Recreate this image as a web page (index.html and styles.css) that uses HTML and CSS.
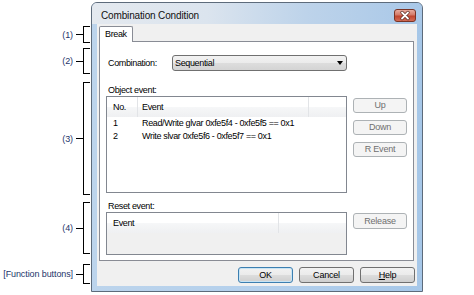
FILE: index.html
```html
<!DOCTYPE html>
<html>
<head>
<meta charset="utf-8">
<link rel="stylesheet" href="styles.css">
</head>
<body>
<div class="page">
  <div class="callout c1"><span class="c-label">(1)</span><span class="dash"></span><span class="brace"></span></div>
  <div class="callout c2"><span class="c-label">(2)</span><span class="dash"></span><span class="brace"></span></div>
  <div class="callout c3"><span class="c-label">(3)</span><span class="dash"></span><span class="brace"></span></div>
  <div class="callout c4"><span class="c-label">(4)</span><span class="dash"></span><span class="brace"></span></div>
  <div class="callout c5"><span class="c-label">[Function buttons]</span><span class="dash"></span><span class="brace"></span></div>

  <div class="window">
    <div class="titlebar">
      <span class="title">Combination Condition</span>
      <svg class="close" width="22" height="13" viewBox="0 0 22 13">
        <defs>
          <linearGradient id="cg" x1="0" y1="0" x2="0" y2="1">
            <stop offset="0" stop-color="#eab0a4"/>
            <stop offset="0.45" stop-color="#d47a68"/>
            <stop offset="0.55" stop-color="#c0452f"/>
            <stop offset="1" stop-color="#d6705a"/>
          </linearGradient>
        </defs>
        <rect x="0.5" y="0.5" width="21" height="12" rx="2.5" fill="url(#cg)" stroke="#7a3426"/>
        <path d="M8 3.5 L14 9.5 M14 3.5 L8 9.5" stroke="#5a2a22" stroke-width="3.2" stroke-linecap="round"/>
        <path d="M8 3.5 L14 9.5 M14 3.5 L8 9.5" stroke="#ffffff" stroke-width="1.8" stroke-linecap="round"/>
      </svg>
    </div>
    <div class="client">
      <div class="tabs"><div class="tab">Break</div></div>
      <div class="panel">
        <div class="combo-row">
          <span class="combo-label">Combination:</span>
          <div class="select"><span>Sequential</span><span class="arrow"></span></div>
        </div>
        <div class="section-label">Object event:</div>
        <div class="obj-row">
          <div class="list obj-list">
            <div class="lv-head">
              <div class="h-no">No.</div>
              <div class="h-ev">Event</div>
            </div>
            <div class="row"><div class="c-no">1</div><div class="c-ev">Read/Write glvar 0xfe5f4 - 0xfe5f5 == 0x1</div></div>
            <div class="row"><div class="c-no">2</div><div class="c-ev">Write slvar 0xfe5f6 - 0xfe5f7 == 0x1</div></div>
          </div>
          <div class="side">
            <div class="btn disabled">Up</div>
            <div class="btn disabled">Down</div>
            <div class="btn disabled">R Event</div>
          </div>
        </div>
        <div class="section-label reset-label">Reset event:</div>
        <div class="obj-row">
          <div class="list reset-list">
            <div class="lv-head">
              <div class="h-rev">Event</div>
            </div>
          </div>
          <div class="side side-reset">
            <div class="btn btn-tall disabled">Release</div>
          </div>
        </div>
      </div>
      <div class="fbar">
        <div class="btn fbtn default">OK</div>
        <div class="btn fbtn">Cancel</div>
        <div class="btn fbtn"><span class="u">H</span>elp</div>
      </div>
    </div>
  </div>
</div>
</body>
</html>
```
FILE: styles.css
```css
* { box-sizing: border-box; }

body {
  margin: 0;
  background: #ffffff;
  font-family: "Liberation Sans", Arial, sans-serif;
  font-size: 9px;
  letter-spacing: -0.35px;
  color: #000;
}

.page {
  position: relative;
  width: 474px;
  height: 295px;
  padding: 2px 0 0 91px;
}

/* callouts on the left */
.callout {
  position: absolute;
  left: 0;
  width: 90px;
  display: flex;
  align-items: center;
  justify-content: flex-end;
}
.c1 { top: 26px; height: 17px; }
.c2 { top: 48px; height: 26px; }
.c3 { top: 82px; height: 113px; }
.c4 { top: 202px; height: 52px; }
.c5 { top: 264px; height: 20px; }

.c-label {
  color: #24356a;
  margin-right: 3px;
  letter-spacing: -0.1px;
}
.dash {
  width: 7px;
  height: 1px;
  background: #000;
}
.brace {
  width: 7px;
  height: 100%;
  border: 1px solid #000;
  border-right: none;
}

/* window */
.window {
  width: 332px;
  height: 290px;
  border: 1px solid #5d6b7b;
  border-radius: 6px 6px 0 0;
  background: linear-gradient(to right, #bcd4ec 0%, #b4d0ec 50%, #a6c7e8 100%);
  display: flex;
  flex-direction: column;
  overflow: hidden;
}

.titlebar {
  height: 21px;
  flex: none;
  display: flex;
  justify-content: space-between;
  align-items: flex-start;
  padding: 6px 6px 0 9px;
  background: linear-gradient(to right, #e4e9ef 0%, #dbe4ee 35%, #bdd3ea 65%, #a9c8e8 100%);
}
.title {
  font-size: 10px;
  line-height: 13px;
  letter-spacing: -0.15px;
  color: #111;
}
.close { display: block; }

.client {
  margin: 0 5px 5px;
  height: 262px;
  flex: none;
  background: #f0f0f0;
  padding: 2px 3px 3px 2px;
  display: flex;
  flex-direction: column;
}

.tabs {
  height: 15px;
  display: flex;
  flex: none;
}
.tab {
  width: 34px;
  height: 16px;
  border: 1px solid #898c95;
  border-bottom: none;
  border-radius: 2px 2px 0 0;
  background: #ffffff;
  padding-left: 5px;
  line-height: 14px;
  position: relative;
  z-index: 1;
}

.panel {
  height: 220px;
  flex: none;
  border: 1px solid #898c95;
  background: #ffffff;
  padding: 0 6px;
  display: flex;
  flex-direction: column;
}

.combo-row {
  margin-top: 13px;
  height: 16px;
  display: flex;
  align-items: center;
  padding-left: 2px;
}
.combo-label {
  width: 64px;
  line-height: 16px;
}
.select {
  width: 175px;
  height: 16px;
  border: 1px solid #707070;
  border-radius: 3px;
  background: linear-gradient(#f2f2f2 0%, #ebebeb 50%, #dddddd 50%, #d4d4d4 100%);
  display: flex;
  align-items: center;
  justify-content: space-between;
  padding: 0 3px 0 2px;
  line-height: 14px;
}
.arrow {
  width: 0;
  height: 0;
  border-left: 3px solid transparent;
  border-right: 3px solid transparent;
  border-top: 4px solid #000;
}

.section-label {
  margin-top: 13px;
  height: 12px;
  line-height: 12px;
  padding-left: 2px;
}
.reset-label { margin-top: 7px; }

.obj-row {
  display: flex;
  gap: 6px;
}

.list {
  width: 241px;
  border: 1px solid #828790;
  background: #ffffff;
}
.obj-list { height: 97px; }
.reset-list { height: 43px; background: #f0f0f0; }

.lv-head {
  height: 20px;
  display: flex;
  background: linear-gradient(#ffffff 0%, #ffffff 50%, #f6f7f8 50%, #eff0f2 100%);
  line-height: 20px;
}
.h-no {
  width: 31px;
  padding-left: 6px;
  border-right: 1px solid #e2e4e7;
}
.h-ev {
  width: 171px;
  padding-left: 4px;
  border-right: 1px solid #e2e4e7;
}
.h-rev {
  width: 172px;
  padding-left: 6px;
  border-right: 1px solid #e2e4e7;
}

.row {
  height: 13px;
  display: flex;
  line-height: 13px;
  white-space: nowrap;
}
.c-no { width: 31px; padding-left: 6px; }
.c-ev { padding-left: 4px; }

.side {
  display: flex;
  flex-direction: column;
  gap: 7px;
  padding-top: 2px;
}
.side-reset { padding-top: 1px; }

.btn {
  width: 54px;
  height: 15px;
  border: 1px solid #707070;
  border-radius: 3px;
  background: linear-gradient(#f2f2f2 0%, #ebebeb 50%, #dddddd 50%, #cfcfcf 100%);
  text-align: center;
  line-height: 13px;
  letter-spacing: -0.2px;
}
.btn-tall { height: 16px; line-height: 14px; }
.btn.disabled {
  border-color: #adb2b5;
  background: #f4f4f4;
  color: #6f6f6f;
}

.fbar {
  margin-top: 6px;
  margin-right: -1px;
  display: flex;
  justify-content: flex-end;
  gap: 6px;
}
.fbtn {
  width: 55px;
  height: 16px;
  line-height: 14px;
}
.btn.default {
  border-color: #3c7fb1;
  box-shadow: inset 0 0 0 1px #c8e4f4;
}
.u { text-decoration: underline; }
```
